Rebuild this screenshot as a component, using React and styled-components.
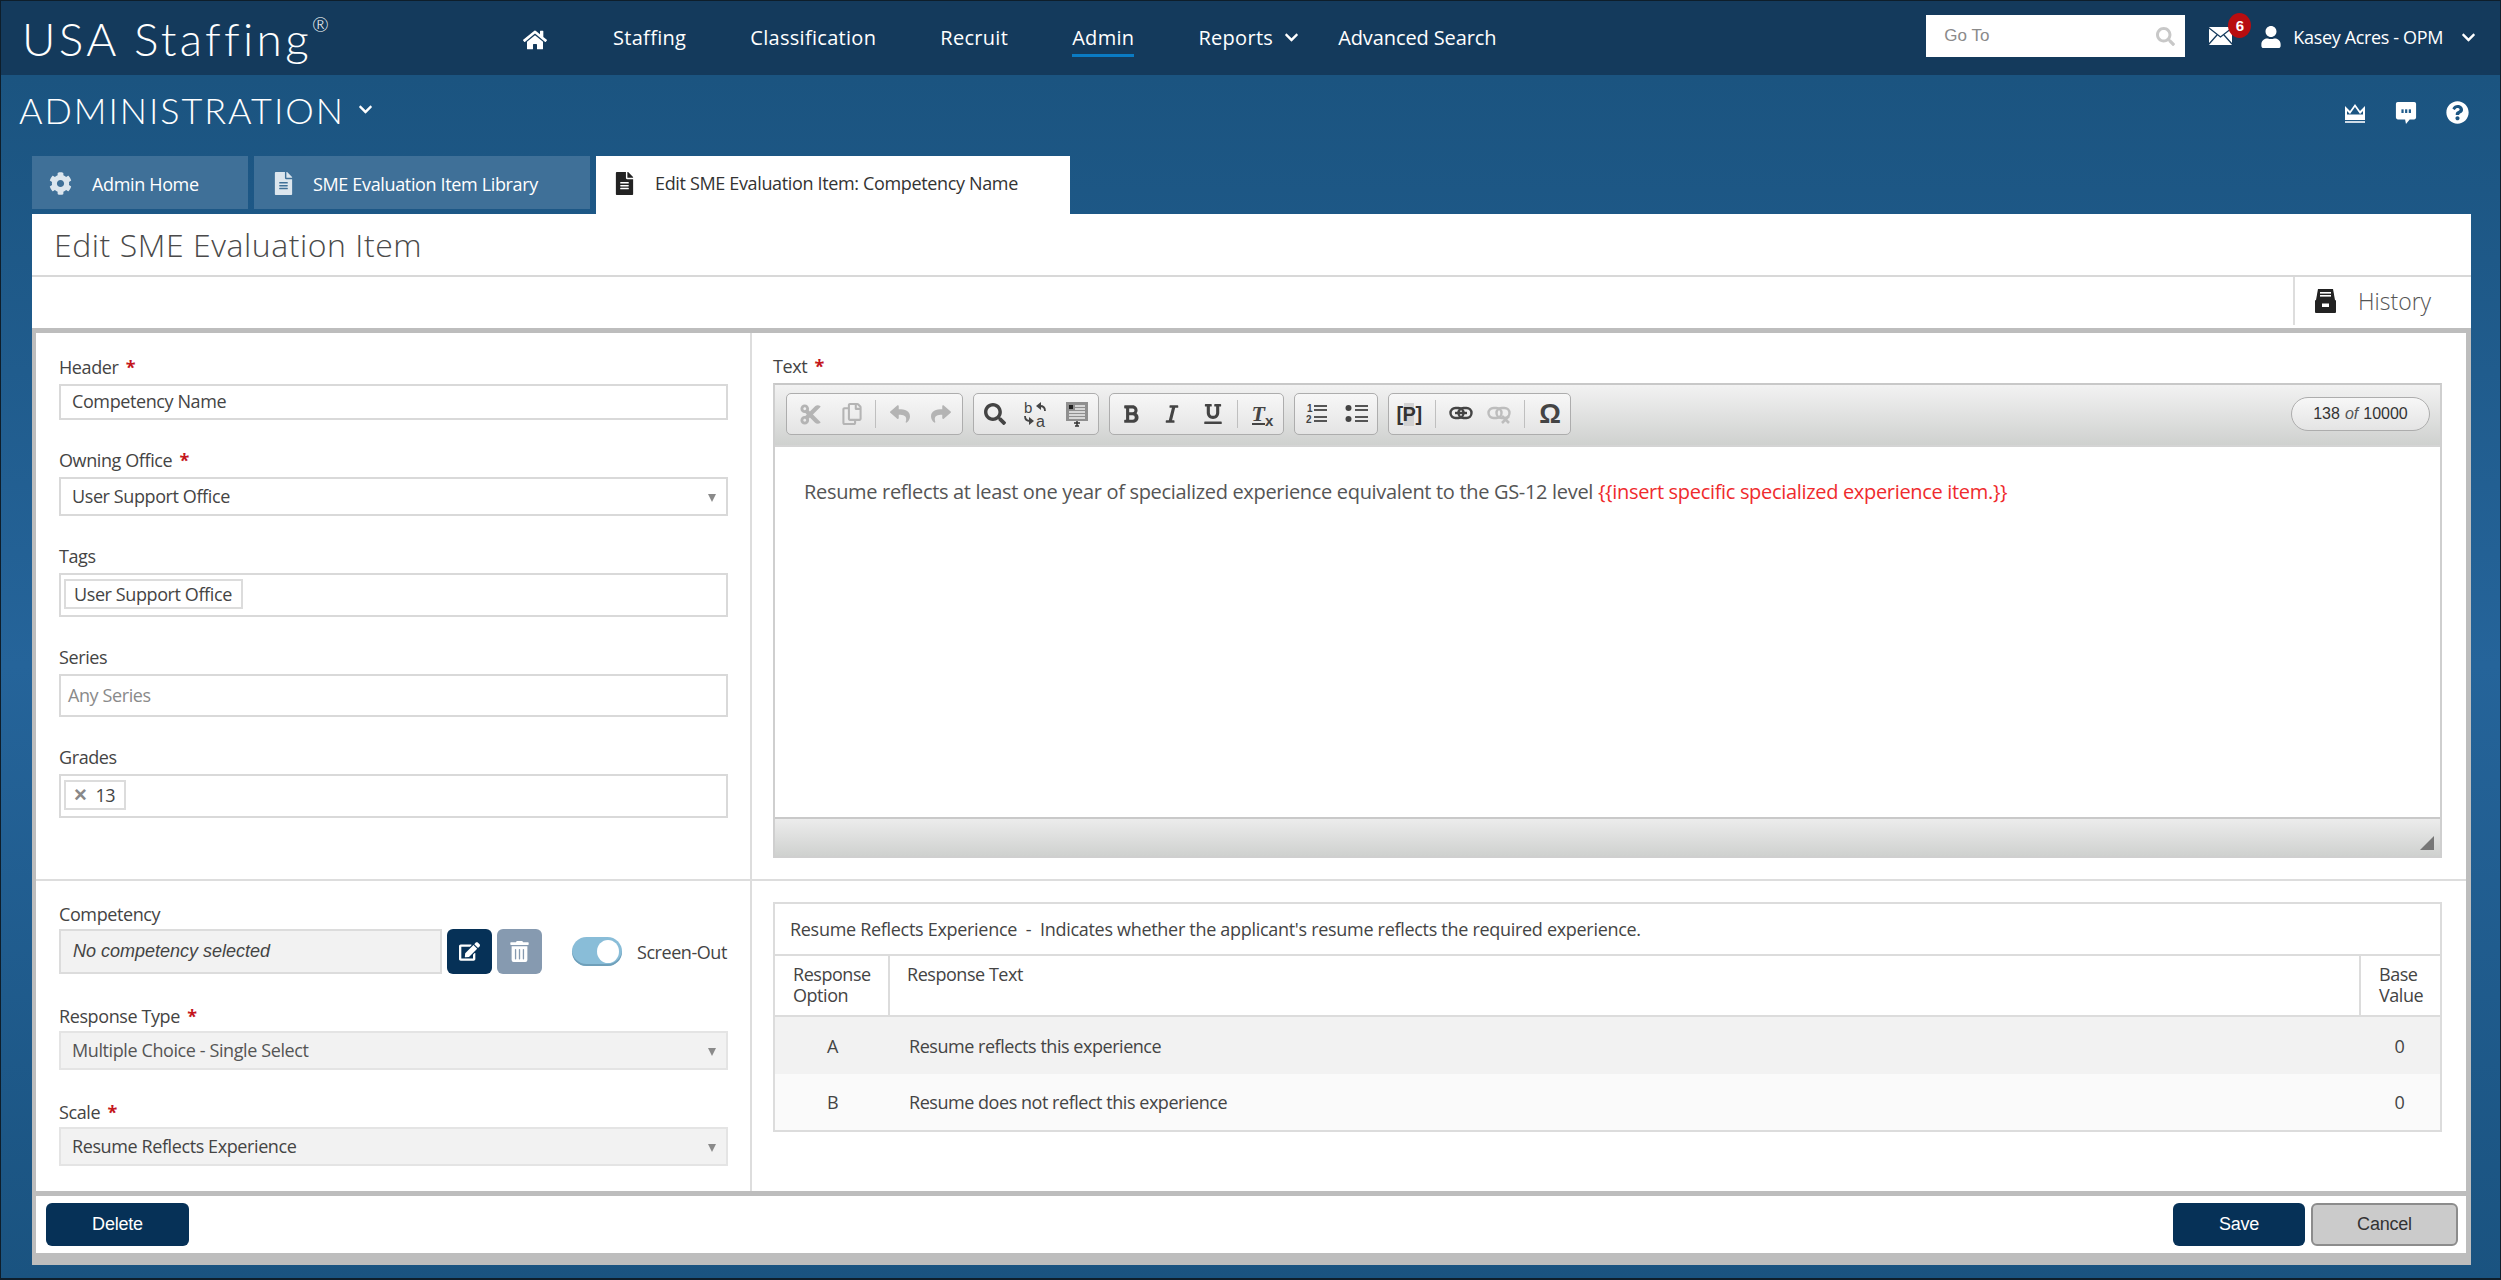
import React from 'react';
import styled, { createGlobalStyle } from 'styled-components';
import { FaHome, FaCog, FaFileAlt, FaUser, FaChevronDown, FaSearch, FaEdit, FaTrashAlt, FaCut, FaRegCopy, FaReply, FaShare, FaBold, FaItalic, FaUnderline, FaQuestionCircle } from 'react-icons/fa';

const UI = '"Open Sans", "Noto Sans", sans-serif';
const ARIAL = '"Liberation Sans", Arial, sans-serif';

const Global = createGlobalStyle`
  html, body { margin: 0; padding: 0; background: #0d1b26; }
  * { box-sizing: border-box; }
`;

const Frame = styled.div`
  width: 2501px; height: 1280px; overflow: hidden;
  display: flex; flex-direction: column;
  border: 1px solid #0e1e2b; border-bottom-width: 2px;
  background: linear-gradient(180deg, #1b5480 6%, #25649a 52%, #1a5380 100%);
  font-family: ${UI}; color: #444;
`;

const TopBar = styled.header`
  height: 74px; flex: none; background: #143a5c; color: #fff;
  display: flex; align-items: center; padding: 0 24px 0 21px;
`;
const Logo = styled.div`
  width: 501px; font-family: Lato, sans-serif; font-weight: 300; font-size: 46px; letter-spacing: 3.3px; line-height: 1;
  white-space: nowrap; margin-top: 2px;
  sup { font-size: 20px; vertical-align: 24px; line-height: 0; letter-spacing: 0; }
`;
const Nav = styled.nav`display: flex; align-items: center; gap: 64px; margin-top: -2px;`;
const NavLink = styled.a`
  position: relative; font-size: 20px; letter-spacing: ${p => p.$track ?? 0.3}px; font-weight: 500; color: #fff; white-space: nowrap;
  display: flex; align-items: center; gap: 11px; margin-right: ${p => p.$mr || 0}px;
  ${p => p.$active && `&::after { content: ''; position: absolute; left: 0; right: 0; bottom: -6px; height: 3px; background: #0a7bc4; }`}
`;
const HomeLink = styled(NavLink)`margin-right: 2px; margin-top: 5px; font-size: 24px;`;
const TopRight = styled.div`margin-left: auto; display: flex; align-items: center;`;
const GoTo = styled.div`
  width: 259px; height: 42px; background: #fff; display: flex; align-items: center; justify-content: space-between;
  padding: 0 10px 0 18px; color: #8a8a8a; font-family: ${ARIAL}; font-size: 17px; margin-top: -4px;
  svg { color: #c8c8c8; font-size: 19px; }
`;
const MailWrap = styled.div`position: relative; margin-left: 24px; margin-right: 28px; height: 18px; width: 23px; margin-top: -5px; display: flex;`;
const Badge = styled.span`
  position: absolute; top: -14px; left: 19px; width: 23px; height: 25px; border-radius: 50%;
  background: #b80d10; color: #fff; font: 700 15px/25px ${ARIAL}; text-align: center;
`;
const UserName = styled.div`
  display: flex; align-items: center; color: #fff; font-size: 18px; letter-spacing: -.35px; font-weight: 500; white-space: nowrap; margin-top: -2px;
`;
const UserIcon = styled(FaUser)`font-size: 22px; margin-right: 11px;`;
const UserChevron = styled(FaChevronDown)`font-size: 15px; margin-left: 18px;`;

const SubBar = styled.div`
  height: 81px; flex: none; display: flex; align-items: center; justify-content: space-between; padding: 0 31px 0 18px; color: #fff;
`;
const Area = styled.div`
  display: flex; align-items: center; gap: 13px; font-family: Lato, sans-serif; font-size: 36px; font-weight: 300; letter-spacing: 1.95px; margin-top: -12px;
`;
const AreaIcons = styled.div`display: flex; align-items: center; gap: 29px; margin-top: -6px;`;

const Tabs = styled.div`height: 58px; flex: none; display: flex; align-items: flex-start; gap: 6px; padding-left: 31px;`;
const Tab = styled.div`
  width: ${p => p.$w}px; height: ${p => (p.$active ? 58 : 53)}px; background: ${p => (p.$active ? '#fff' : '#3f7098')};
  color: ${p => (p.$active ? '#333' : '#fff')}; padding-left: ${p => p.$pad}px; padding-top: 2px; padding-bottom: ${p => (p.$active ? 6 : 0)}px;
  display: flex; align-items: center; gap: ${p => p.$gap}px; font-size: 18px; letter-spacing: -.35px; white-space: nowrap;
  svg { font-size: 23px; color: ${p => (p.$active ? '#222' : '#dce6ee')}; flex: none; }
`;

const Panel = styled.main`
  flex: none; width: 2439px; height: 1051px; margin-left: 31px; background: #bdbdbd; display: flex; flex-direction: column;
`;
const TitleRow = styled.div`
  height: 63px; flex: none; background: #fff; border-bottom: 2px solid #d8d8d8; padding-left: 22px; display: flex; align-items: center;
  font-size: 32px; font-weight: 300; color: #4a4a4a; letter-spacing: .55px;
`;
const ActionRow = styled.div`height: 51px; flex: none; background: #fff; display: flex; justify-content: flex-end;`;
const HistoryBtn = styled.div`
  width: 178px; border-left: 2px solid #ddd; display: flex; align-items: center; gap: 22px; padding-left: 20px;
  font-size: 23px; font-weight: 300; color: #555; margin-bottom: 3px;
`;
const Body = styled.div`
  margin: 5px 5px 5px 4px; background: #fff; height: 858px; flex: none; display: grid; grid-template-columns: 716px 1fr; grid-template-rows: 548px 310px;
`;
const Cell = styled.section`
  padding: ${p => p.$top}px ${p => p.$right}px 0 ${p => p.$left}px;
  ${p => p.$divide && 'border-right: 2px solid #ddd;'}
  ${p => p.$under && 'border-bottom: 2px solid #ddd;'}
  display: flex; flex-direction: column; gap: ${p => p.$gap || 0}px;
`;
const Field = styled.div`display: flex; flex-direction: column;`;
const Label = styled.label`
  height: 24px; line-height: 24px; font-size: 18px; letter-spacing: -.4px; color: #444; margin-bottom: ${p => p.$mb ?? 5}px; white-space: nowrap;
`;
const Req = styled.span`color: #c4161c; font-weight: 700; margin-left: 3px;`;
const Control = styled.div`
  position: relative; height: ${p => p.$h}px; border: 2px solid ${p => (p.$off ? '#e4e4e4' : '#d9d9d9')}; background: ${p => (p.$off ? '#f2f2f2' : '#fff')};
  display: flex; align-items: center; padding: 0 0 2px ${p => p.$pad ?? 11}px; font-size: 18px; letter-spacing: -.4px; color: ${p => p.$color || '#444'}; white-space: nowrap;
`;
const Caret = styled.i`
  position: absolute; right: 10px; top: 50%; margin-top: -3px; width: 0; height: 0;
  border-left: 4px solid transparent; border-right: 4px solid transparent; border-top: 8px solid #8a8a8a;
`;
const Chip = styled.span`
  height: 30px; border: 2px solid #dcdcdc; display: inline-flex; align-items: center; gap: 9px; padding: 0 9px 0 8px; font-size: 18px; letter-spacing: -.4px; color: #444;
`;
const ChipX = styled.b`color: #888; font: 700 22px/1 ${ARIAL};`;

const CompRow = styled.div`display: flex; align-items: center; height: 45px;`;
const CompField = styled.div`
  width: 383px; height: 45px; border: 2px solid #dcdcdc; background: #f2f2f2; padding-left: 12px; display: flex; align-items: center;
  font: italic 18px ${ARIAL}; color: #444; white-space: nowrap;
`;
const IconBtn = styled.div`
  width: 45px; height: 45px; border-radius: 6px; background: ${p => p.$bg}; color: #fff; margin-left: ${p => p.$ml}px;
  display: flex; align-items: center; justify-content: center; font-size: 21px;
`;
const Toggle = styled.div`
  width: 50px; height: 29px; margin-left: 30px; margin-right: 15px; border-radius: 15px; background: #89bdd8; box-shadow: inset 0 -2px 0 #6f9fb9; position: relative;
  &::after { content: ''; position: absolute; right: 3px; top: 3px; width: 22px; height: 23px; border-radius: 50%; background: #fff; }
`;
const ToggleText = styled.span`font-size: 18px; letter-spacing: -.45px; color: #444; white-space: nowrap;`;

const Editor = styled.div`height: 475px; flex: none; border: 2px solid #cfcfcf; border-top-color: #c8c8c8; display: flex; flex-direction: column;`;
const EdToolbar = styled.div`
  height: 62px; flex: none; background: linear-gradient(180deg, #f2f2f2, #cfd1cf); border-bottom: 2px solid #d4d4d4; display: flex; align-items: flex-start; padding: 8px 10px 0 11px; gap: 10px;
`;
const EdGroup = styled.div`
  height: 42px; width: ${p => p.$w}px; flex: none; border: 1px solid #adadad; border-radius: 5px; background: linear-gradient(180deg, #f7f7f7, #e4e4e4);
  display: flex; align-items: center; padding-left: ${p => p.$pl ?? 0}px;
`;
const EdBtn = styled.span`
  width: ${p => p.$w || 41}px; flex: none; display: flex; align-items: center; justify-content: center; color: ${p => (p.$off ? '#b4b4b4' : '#444')}; font-size: ${p => p.$size || 20}px; font-family: ${ARIAL};
`;
const EdSep = styled.i`width: 1px; height: 28px; margin: 0 ${p => p.$m}px; flex: none; background: #bfbfbf;`;
const ParaMark = styled.b`font-size: 20px; letter-spacing: -.5px; color: #333; background: linear-gradient(90deg, transparent 30%, #d2d2d2 30%, #d2d2d2 70%, transparent 70%);`;
const Omega = styled.b`font-size: 27px; line-height: 1; color: #444;`;
const ClearMark = styled.span`
  display: inline-flex; align-items: flex-end; font-family: "Liberation Serif", serif; font-size: 22px; line-height: 22px; color: #444;
  b { font-style: italic; border-bottom: 2px solid #444; line-height: 19px; }
  u { font: 700 15px/1 ${ARIAL}; text-decoration: none; margin-bottom: -3px; }
`;
const Counter = styled.div`
  margin-left: auto; height: 34px; width: 139px; border: 1px solid #adadad; border-radius: 17px; background: linear-gradient(180deg,#f7f7f7,#e4e4e4); margin-top: 4px;
  display: flex; align-items: center; justify-content: center; font: 16px ${ARIAL}; color: #333; gap: 5px; em { color: #555; }
`;
const EdBody = styled.div`
  flex: 1; background: #fff; padding: 32px 0 0 29px; font-size: 20px; letter-spacing: -.32px; line-height: 26px; color: #555; white-space: nowrap;
  span { color: #ef2b2d; }
`;
const EdStatus = styled.div`
  height: 39px; flex: none; border-top: 2px solid #c9c9c9; background: linear-gradient(180deg, #ececec, #cfd1cf); position: relative;
  &::after { content: ''; position: absolute; right: 6px; bottom: 6px; border-left: 14px solid transparent; border-bottom: 14px solid #777; }
`;

const RespTable = styled.div`border: 2px solid #dcdcdc; height: 230px; flex: none; display: flex; flex-direction: column;`;
const RespTitle = styled.div`
  height: 52px; flex: none; border-bottom: 2px solid #dcdcdc; display: flex; align-items: center; padding-left: 15px; font-size: 18px; letter-spacing: -.3px; color: #444; white-space: pre;
`;
const RespRow = styled.div`
  display: grid; grid-template-columns: 115px 1fr 81px; flex: none; height: ${p => p.$h}px; background: ${p => p.$bg || '#fff'};
  ${p => p.$head && 'border-bottom: 2px solid #dcdcdc;'}
`;
const HeadCell = styled.div`
  padding: 8px 0 0 ${p => p.$pl}px; font-size: 18px; letter-spacing: -.46px; line-height: 21px; color: #444;
  ${p => p.$border === 'right' && 'border-right: 2px solid #dcdcdc;'}
  ${p => p.$border === 'left' && 'border-left: 2px solid #dcdcdc;'}
`;
const DataCell = styled.div`
  display: flex; align-items: center; justify-content: ${p => (p.$center ? 'center' : 'flex-start')}; padding-left: ${p => p.$pl || 0}px;
  font-size: 18px; letter-spacing: -.46px; color: #444;
`;

const Footer = styled.footer`
  margin: 0 5px 12px 4px; height: 57px; flex: none; background: #fff; display: flex; align-items: center; justify-content: space-between; padding: 0 8px 0 10px; font-family: ${ARIAL};
`;
const FootGroup = styled.div`display: flex; gap: 6px;`;
const Btn = styled.button`
  width: ${p => p.$w}px; height: 43px; border-radius: 6px; font: 18px ${ARIAL}; letter-spacing: -.2px;
  background: ${p => (p.$light ? '#cbcbcb' : '#063157')}; color: ${p => (p.$light ? '#333' : '#fff')};
  border: ${p => (p.$light ? '2px solid #8c8c8c' : '0')};
`;

const Crown = () => (
  <svg width="22" height="20" viewBox="0 0 22 20" fill="#fff"><path d="M1 3l5 5 5-7 5 7 5-5v11H1zM3 8v3.5h16V8l-3 3-5-7-5 7z" fillRule="evenodd" /><rect x="1" y="14" width="20" height="3" /><rect x="1" y="18" width="20" height="2" fill="#cfdbe6" /></svg>
);
const Bubble = () => (
  <svg width="22" height="24" viewBox="0 0 24 26" fill="#fff"><path d="M3 1h18a2 2 0 012 2v15a2 2 0 01-2 2h-5l-4 5-1-5H3a2 2 0 01-2-2V3a2 2 0 012-2z" /><g fill="#1f5b8b"><rect x="7" y="9" width="2.4" height="4" /><rect x="11" y="9" width="2.4" height="4" /><rect x="15" y="9" width="2.4" height="4" /></g></svg>
);
const Mail = () => (
  <svg width="23" height="18" viewBox="0 0 23 18"><rect width="23" height="18" rx="1" fill="#fff" /><path d="M0 1l11.5 9L23 1M0 17l8-9M23 17l-8-9" stroke="#143a5c" strokeWidth="1.3" fill="none" /></svg>
);
const Archive = () => (
  <svg width="21" height="24" viewBox="0 0 21 24"><path d="M3 0h15l2 11H1z" fill="#222" /><g fill="#fff"><rect x="5" y="3" width="11" height="1.6" /><rect x="5" y="6" width="11" height="1.6" /></g><rect x="0" y="11" width="21" height="13" rx="1" fill="#222" /><rect x="7" y="14.5" width="7" height="3.5" fill="#fff" /></svg>
);
const Replace = () => (
  <svg width="27" height="38" viewBox="0 -6 27 38" fill="#444"><text x="2" y="12" fontFamily={ARIAL} fontSize="15">b</text><text x="14" y="26" fontFamily={ARIAL} fontSize="16">a</text><path d="M23 10Q23 5 18 5" fill="none" stroke="#444" strokeWidth="1.8" /><path d="M19 1l-5 4 5 4z" /><path d="M3 15Q3 20 8 20" fill="none" stroke="#444" strokeWidth="1.8" /><path d="M7 16l5 4-5 4z" /></svg>
);
const Template = () => (
  <svg width="24" height="26" viewBox="0 0 24 26"><rect x="1" y="1" width="22" height="19" fill="#8f8f8f" /><rect x="4" y="4" width="4" height="4" fill="#222" /><path d="M10 5h10M10 8h10M4 11h16M4 14h16M4 17h16" stroke="#eee" strokeWidth="1.4" /><path d="M9 22h6M12 20v5M10 25h4" stroke="#333" strokeWidth="1.5" fill="none" /></svg>
);
const OrderedList = () => (
  <svg width="24" height="24" viewBox="0 0 24 24"><text x="3" y="10" fontFamily={ARIAL} fontWeight="700" fontSize="10" fill="#444">1</text><text x="2" y="21" fontFamily={ARIAL} fontWeight="700" fontSize="10" fill="#444">2</text><path d="M10 4h13M10 8h13M10 15h13M10 19h13" stroke="#555" strokeWidth="2.2" /></svg>
);
const BulletList = () => (
  <svg width="24" height="24" viewBox="0 0 24 24"><circle cx="3.5" cy="6" r="3" fill="#444" /><circle cx="3.5" cy="17" r="3" fill="#444" /><path d="M10 4h13M10 8h13M10 15h13M10 19h13" stroke="#555" strokeWidth="2.2" /></svg>
);
const ChainLink = ({ off }) => (
  <svg width="24" height="20" viewBox="0 0 24 20" fill="none" stroke={off ? '#bdbdbd' : '#444'}>
    <rect x="1.5" y="4" width="13" height="10" rx="5" strokeWidth="2.4" /><rect x="9.5" y="4" width="13" height="10" rx="5" strokeWidth="2.4" />
    {!off && <path d="M6 9h12" strokeWidth="2.4" />}
    {off && <path d="M15 12l7 7M22 12l-7 7" strokeWidth="2.6" />}
  </svg>
);

const Toolbar = () => (
  <EdToolbar>
    <EdGroup $w={177} $pl={3}>
      <EdBtn $off $size={23}><FaCut /></EdBtn><EdBtn $off $size={22}><FaRegCopy /></EdBtn><EdSep $m={3} />
      <EdBtn $off><FaReply /></EdBtn><EdBtn $off><FaShare /></EdBtn>
    </EdGroup>
    <EdGroup $w={126}>
      <EdBtn $size={22}><FaSearch /></EdBtn><EdBtn><Replace /></EdBtn><EdBtn><Template /></EdBtn>
    </EdGroup>
    <EdGroup $w={175}>
      <EdBtn><FaBold /></EdBtn><EdBtn><FaItalic /></EdBtn><EdBtn><FaUnderline /></EdBtn><EdSep $m={4} /><EdBtn><ClearMark><b>T</b><u>x</u></ClearMark></EdBtn>
    </EdGroup>
    <EdGroup $w={84}>
      <EdBtn><OrderedList /></EdBtn><EdBtn><BulletList /></EdBtn>
    </EdGroup>
    <EdGroup $w={183}>
      <EdBtn $w={40}><ParaMark>[P]</ParaMark></EdBtn><EdSep $m={6} /><EdBtn $w={38}><ChainLink /></EdBtn><EdBtn $w={38}><ChainLink off /></EdBtn><EdSep $m={6} /><EdBtn $w={38}><Omega>Ω</Omega></EdBtn>
    </EdGroup>
    <Counter>138 <em>of</em> 10000</Counter>
  </EdToolbar>
);

export default function App() {
  return (
    <Frame>
      <Global />
      <TopBar>
        <Logo>USA Staffing<sup>®</sup></Logo>
        <Nav>
          <HomeLink><FaHome /></HomeLink>
          <NavLink>Staffing</NavLink>
          <NavLink>Classification</NavLink>
          <NavLink>Recruit</NavLink>
          <NavLink $active>Admin</NavLink>
          <NavLink $mr={-25}>Reports <FaChevronDown size={15} /></NavLink>
          <NavLink $track={-0.1}>Advanced Search</NavLink>
        </Nav>
        <TopRight>
          <GoTo>Go To <FaSearch /></GoTo>
          <MailWrap><Mail /><Badge>6</Badge></MailWrap>
          <UserName><UserIcon />Kasey Acres - OPM<UserChevron /></UserName>
        </TopRight>
      </TopBar>
      <SubBar>
        <Area>ADMINISTRATION <FaChevronDown size={15} /></Area>
        <AreaIcons><Crown /><Bubble /><FaQuestionCircle size={23} /></AreaIcons>
      </SubBar>
      <Tabs>
        <Tab $w={216} $pad={17} $gap={20}><FaCog />Admin Home</Tab>
        <Tab $w={336} $pad={18} $gap={18}><FaFileAlt />SME Evaluation Item Library</Tab>
        <Tab $w={474} $pad={17} $gap={19} $active><FaFileAlt />Edit SME Evaluation Item: Competency Name</Tab>
      </Tabs>
      <Panel>
        <TitleRow>Edit SME Evaluation Item</TitleRow>
        <ActionRow><HistoryBtn><Archive />History</HistoryBtn></ActionRow>
        <Body>
          <Cell $top={22} $left={23} $right={22} $gap={28} $divide $under>
            <Field><Label>Header <Req>*</Req></Label><Control $h={36}>Competency Name</Control></Field>
            <Field><Label>Owning Office <Req>*</Req></Label><Control $h={39}>User Support Office<Caret /></Control></Field>
            <Field><Label>Tags</Label><Control $h={44} $pad={3}><Chip>User Support Office</Chip></Control></Field>
            <Field><Label>Series</Label><Control $h={43} $pad={7} $color="#8a8a8a">Any Series</Control></Field>
            <Field><Label>Grades</Label><Control $h={44} $pad={3}><Chip><ChipX>×</ChipX>13</Chip></Control></Field>
          </Cell>
          <Cell $top={21} $left={21} $right={24} $under>
            <Label>Text <Req>*</Req></Label>
            <Editor>
              <Toolbar />
              <EdBody>Resume reflects at least one year of specialized experience equivalent to the GS-12 level <span>{'{{insert specific specialized experience item.}}'}</span></EdBody>
              <EdStatus />
            </Editor>
          </Cell>
          <Cell $top={21} $left={23} $right={22} $gap={30} $divide>
            <Field>
              <Label $mb={3}>Competency</Label>
              <CompRow>
                <CompField>No competency selected</CompField>
                <IconBtn $bg="#063157" $ml={5}><FaEdit /></IconBtn>
                <IconBtn $bg="#869ab0" $ml={5}><FaTrashAlt /></IconBtn>
                <Toggle /><ToggleText>Screen-Out</ToggleText>
              </CompRow>
            </Field>
            <Field><Label $mb={3}>Response Type <Req>*</Req></Label><Control $h={39} $off $color="#555">Multiple Choice - Single Select<Caret /></Control></Field>
            <Field><Label $mb={3}>Scale <Req>*</Req></Label><Control $h={39} $off>Resume Reflects Experience<Caret /></Control></Field>
          </Cell>
          <Cell $top={21} $left={21} $right={24}>
            <RespTable>
              <RespTitle>Resume Reflects Experience  -  Indicates whether the applicant's resume reflects the required experience.</RespTitle>
              <RespRow $h={61} $head>
                <HeadCell $pl={18} $border="right">Response<br />Option</HeadCell>
                <HeadCell $pl={17}>Response Text</HeadCell>
                <HeadCell $pl={18} $border="left">Base<br />Value</HeadCell>
              </RespRow>
              <RespRow $h={57} $bg="#f2f2f2"><DataCell $center>A</DataCell><DataCell $pl={19}>Resume reflects this experience</DataCell><DataCell $center>0</DataCell></RespRow>
              <RespRow $h={56} $bg="#fafafa"><DataCell $center>B</DataCell><DataCell $pl={19}>Resume does not reflect this experience</DataCell><DataCell $center>0</DataCell></RespRow>
            </RespTable>
          </Cell>
        </Body>
        <Footer>
          <Btn $w={143}>Delete</Btn>
          <FootGroup><Btn $w={132}>Save</Btn><Btn $w={147} $light>Cancel</Btn></FootGroup>
        </Footer>
      </Panel>
    </Frame>
  );
}
